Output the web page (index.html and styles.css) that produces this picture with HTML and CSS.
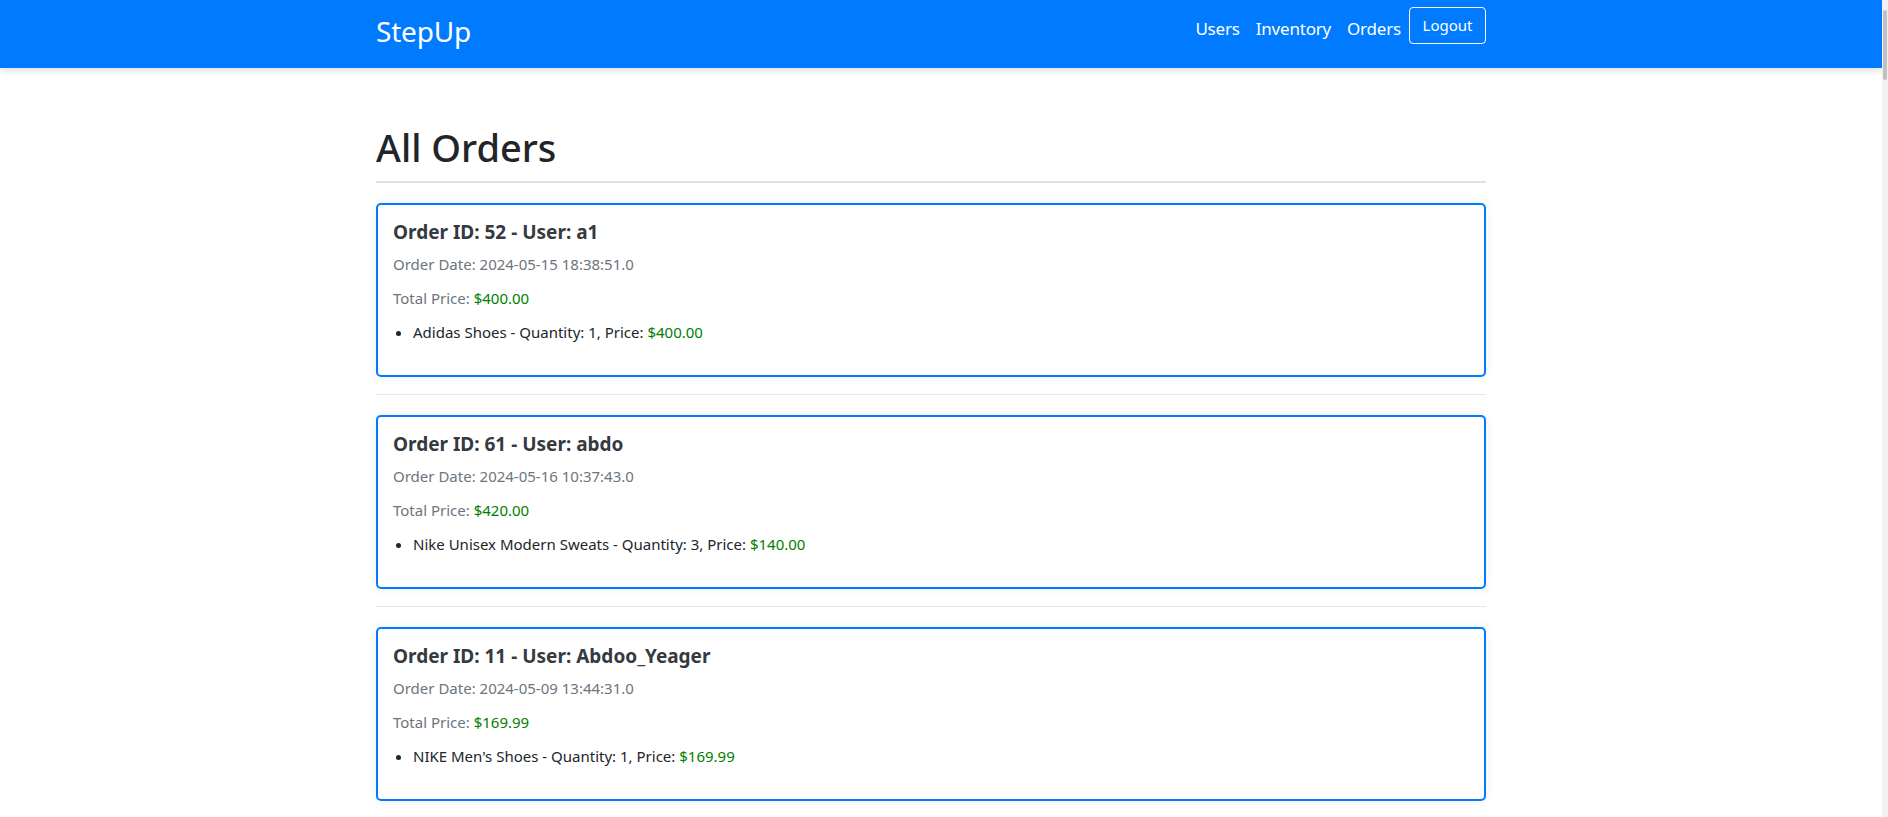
FILE: index.html
```html
<!DOCTYPE html>
<html lang="en">
<head>
<meta charset="utf-8">
<title>StepUp - All Orders</title>
<link rel="stylesheet" href="styles.css">
</head>
<body>
<nav class="navbar">
  <div class="nav-inner">
    <a class="brand" href="#">StepUp</a>
    <div class="nav-links">
      <a class="nav-link" href="#">Users</a>
      <a class="nav-link" href="#">Inventory</a>
      <a class="nav-link" href="#">Orders</a>
      <button class="btn-logout" type="button">Logout</button>
    </div>
  </div>
</nav>
<main class="container">
  <h1 class="page-title">All Orders</h1>
  <section class="orders">
    <article class="order-card">
      <h5 class="order-title">Order ID: 52 - User: a1</h5>
      <p class="order-meta">Order Date: 2024-05-15 18:38:51.0</p>
      <p class="order-meta">Total Price: <span class="price">$400.00</span></p>
      <ul class="order-items">
        <li>Adidas Shoes - Quantity: 1, Price: <span class="price">$400.00</span></li>
      </ul>
    </article>
    <hr class="sep">
    <article class="order-card">
      <h5 class="order-title">Order ID: 61 - User: abdo</h5>
      <p class="order-meta">Order Date: 2024-05-16 10:37:43.0</p>
      <p class="order-meta">Total Price: <span class="price">$420.00</span></p>
      <ul class="order-items">
        <li>Nike Unisex Modern Sweats - Quantity: 3, Price: <span class="price">$140.00</span></li>
      </ul>
    </article>
    <hr class="sep">
    <article class="order-card">
      <h5 class="order-title">Order ID: 11 - User: Abdoo_Yeager</h5>
      <p class="order-meta">Order Date: 2024-05-09 13:44:31.0</p>
      <p class="order-meta">Total Price: <span class="price">$169.99</span></p>
      <ul class="order-items">
        <li>NIKE Men's Shoes - Quantity: 1, Price: <span class="price">$169.99</span></li>
      </ul>
    </article>
    <hr class="sep">
  </section>
</main>
<div class="fake-scrollbar" aria-hidden="true"><div class="fake-thumb"></div></div>
</body>
</html>
```

FILE: styles.css
```css
* { box-sizing: border-box; }

html, body {
  margin: 0;
  padding: 0;
}

body {
  font-family: "Noto Sans", "Open Sans", "Liberation Sans", sans-serif;
  font-size: 16px;
  line-height: 1.5;
  color: #212529;
  background: #ffffff;
  padding-right: 6px;
}

.navbar {
  background: #007bff;
  height: 68px;
  box-shadow: 0 3px 7px rgba(0, 0, 0, 0.12);
  position: relative;
  z-index: 1;
}

.nav-inner {
  width: 1110px;
  margin-left: 376px;
  height: 100%;
  display: flex;
  justify-content: space-between;
  align-items: flex-start;
}

.brand {
  color: #ffffff;
  text-decoration: none;
  font-size: 28px;
  line-height: 42px;
  margin-top: 10px;
  letter-spacing: -0.2px;
}

.nav-links {
  display: flex;
  align-items: flex-start;
}

.nav-link {
  color: #ffffff;
  text-decoration: none;
  font-size: 17px;
  line-height: 26px;
  padding: 0 8px;
  margin-top: 16px;
  letter-spacing: -0.2px;
}

.btn-logout {
  font-family: inherit;
  font-size: 15px;
  line-height: 23px;
  color: #ffffff;
  background: transparent;
  border: 1px solid #ffffff;
  border-radius: 4px;
  padding: 6px 12px;
  margin-top: 7px;
  height: 37px;
  width: 77px;
}

.container {
  width: 1110px;
  margin-left: 376px;
}

.page-title {
  font-size: 38px;
  font-weight: 500;
  line-height: 48px;
  margin: 55px 0 20px;
  padding-bottom: 10px;
  border-bottom: 2px solid #dee2e6;
}

.order-card {
  border: 2px solid #007bff;
  border-radius: 5px;
  padding: 15px;
  box-shadow: 0 0 10px rgba(0, 0, 0, 0.08);
}

.order-title {
  font-size: 19px;
  font-weight: 700;
  line-height: 24px;
  margin: 0 0 8px;
  color: #343a40;
}

.order-meta {
  color: #6c757d;
  font-size: 15px;
  line-height: 24px;
  margin: 0 0 10px;
}

.order-items {
  margin: 0 0 16px;
  padding-left: 20px;
  font-size: 15px;
  line-height: 24px;
}

.price {
  color: #008000;
}

.sep {
  border: 0;
  border-top: 1px solid #e6e6e6;
  margin: 17px 0 20px;
}

.fake-scrollbar {
  position: fixed;
  top: 0;
  right: 0;
  width: 6px;
  height: 100%;
  background: #f1f1f1;
  z-index: 5;
}

.fake-thumb {
  margin: 10px 0 0 1px;
  width: 4px;
  height: 70px;
  background: #c1c1c1;
  border-radius: 2px;
}
```
